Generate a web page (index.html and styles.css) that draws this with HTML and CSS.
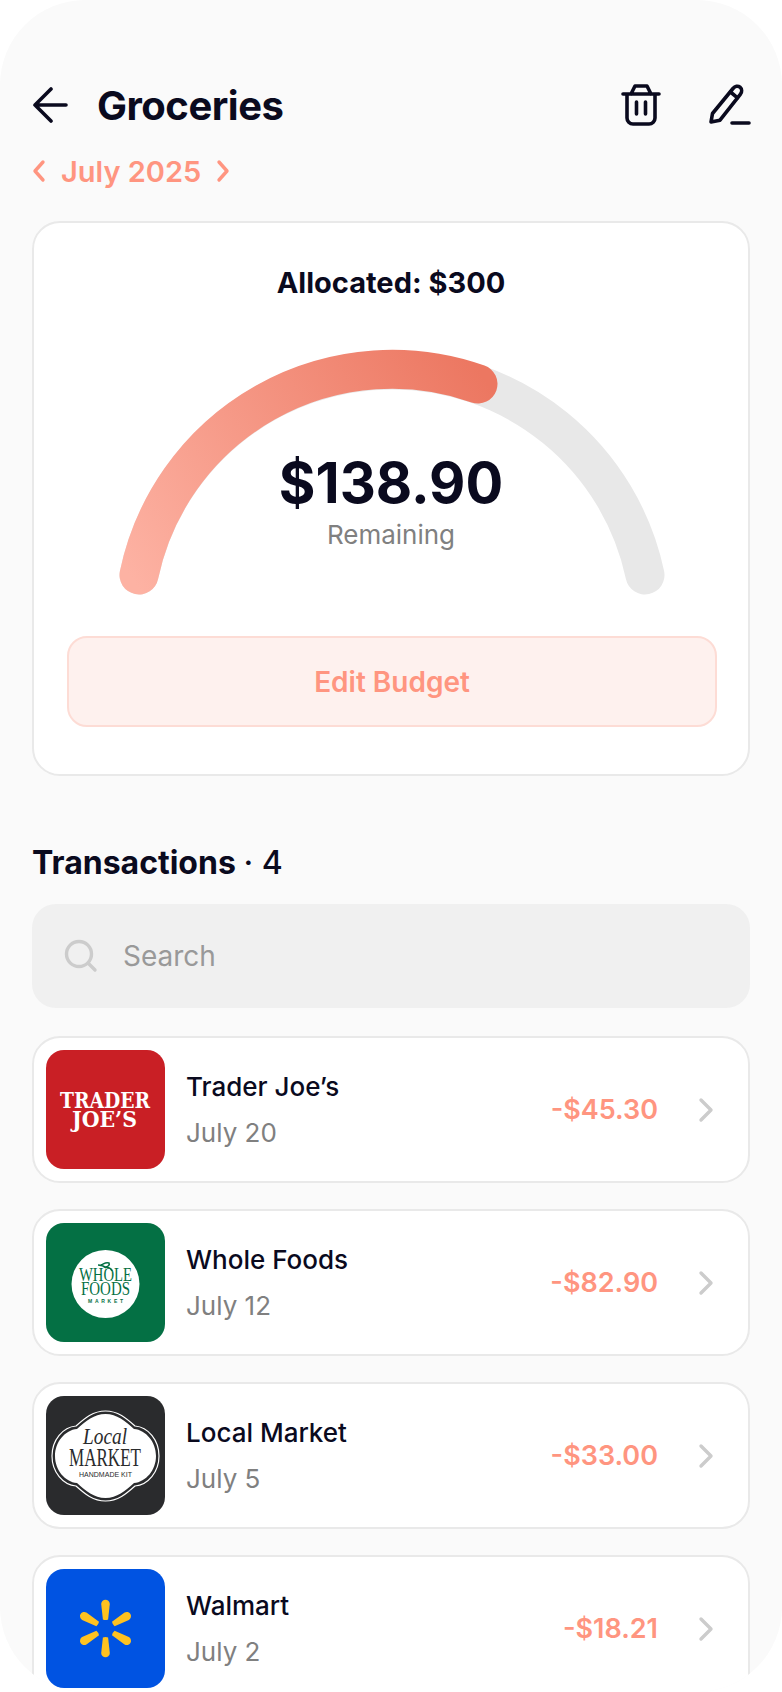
FILE: index.html
```html
<!DOCTYPE html>
<html lang="en">
<head>
    <meta charset="UTF-8">
    <meta name="viewport" content="width=device-width, initial-scale=1.0">
    <title>Groceries</title>
    <link rel="stylesheet" href="styles.css">
</head>
<body>
    <div class="screen">
        <header class="top-bar">
            <svg class="icon-back" viewBox="0 0 36 36" fill="none" stroke="#0a0a1e" stroke-width="3.6" stroke-linecap="round" stroke-linejoin="round">
                <path d="M19 2 3 18l16 16M3 18h31"/>
            </svg>
            <h1 class="page-title">Groceries</h1>
            <svg class="icon-trash" viewBox="0 0 40 44" fill="none" stroke="#0a0a1e" stroke-width="3.6" stroke-linecap="round" stroke-linejoin="round">
                <path d="M2 11h36M6 11v24a6 6 0 0 0 6 6h16a6 6 0 0 0 6-6V11M10 11l4-8h12l4 8M15.500 19v12M24.500 19v12"/>
            </svg>
            <svg class="icon-pen" viewBox="0 0 44 44" fill="none" stroke="#0a0a1e" stroke-width="3.6" stroke-linecap="round" stroke-linejoin="round">
                <path d="M4 39l1.500-8.500L26 5.500c2-2.500 5-3 7-1.300s2.200 4.800.3 7.200L13 37.200 4 39z"/>
                <path d="M23.500 9l7 5.800M25 40h17"/>
            </svg>
        </header>

        <div class="month-nav">
            <svg class="icon-month" viewBox="0 0 14 24" fill="none" stroke="#ff9580" stroke-width="3.4" stroke-linecap="round" stroke-linejoin="round"><path d="M11 3 3 12l8 9"/></svg>
            <span class="month-label">July 2025</span>
            <svg class="icon-month" viewBox="0 0 14 24" fill="none" stroke="#ff9580" stroke-width="3.4" stroke-linecap="round" stroke-linejoin="round"><path d="M3 3l8 9-8 9"/></svg>
        </div>

        <section class="budget-card">
            <h2 class="allocated">Allocated: $300</h2>
            <div class="gauge">
                <svg class="gauge-arc" viewBox="0 0 650 270" fill="none" stroke-width="39" stroke-linecap="round">
                    <defs>
                        <linearGradient id="arc-fill" gradientUnits="userSpaceOnUse" x1="72" y1="250" x2="411" y2="30">
                            <stop offset="0" stop-color="#fdb2a3"/>
                            <stop offset="1" stop-color="#ec7761"/>
                        </linearGradient>
                    </defs>
                    <path d="M72 236A258.600 258.600 0 0 1 578 236" stroke="#e8e8e8"/>
                    <path d="M72 236A258.600 258.600 0 0 1 411 45" stroke="url(#arc-fill)"/>
                </svg>
                <div class="gauge-text">
                    <div class="gauge-amount">$138.90</div>
                    <div class="gauge-label">Remaining</div>
                </div>
            </div>
            <button class="edit-btn">Edit Budget</button>
        </section>

        <h2 class="section-title">Transactions <span class="section-count">· 4</span></h2>

        <div class="search">
            <svg class="icon-search" viewBox="0 0 34 34" fill="none" stroke="#cccccc" stroke-width="3.4" stroke-linecap="round">
                <circle cx="15" cy="15" r="12.500"/>
                <path d="M24.500 24.500 31 31"/>
            </svg>
            <span class="search-text">Search</span>
        </div>

        <div class="tx-row">
            <svg class="logo" viewBox="0 0 119 119">
                <rect class="logo-tj" width="119" height="119" rx="18"/>
                <text class="tj-text" x="14" y="58" textLength="90" lengthAdjust="spacingAndGlyphs">TRADER</text>
                <text class="tj-text" x="26" y="77" textLength="65" lengthAdjust="spacingAndGlyphs">JOE’S</text>
            </svg>
            <div class="tx-info">
                <div class="tx-name">Trader Joe’s</div>
                <div class="tx-date">July 20</div>
            </div>
            <div class="tx-amount">-$45.30</div>
            <svg class="icon-chevron" viewBox="0 0 16 26" fill="none" stroke="#cccccc" stroke-width="3.4" stroke-linecap="round" stroke-linejoin="round"><path d="M3 3l10 10L3 23"/></svg>
        </div>

        <div class="tx-row">
            <svg class="logo" viewBox="0 0 119 119">
                <rect class="logo-wf" width="119" height="119" rx="18"/>
                <circle cx="59.500" cy="61" r="34" fill="#fff"/>
                <path class="wf-leaf" d="M55 42c3-1 4-3 8-2 1 2-1 4-4 4 3 0 6 1 7 4M52 42c3 0 6 1 8 3"/>
                <text class="wf-text" x="33" y="58" textLength="53" lengthAdjust="spacingAndGlyphs">WHOLE</text>
                <text class="wf-text" x="35" y="72" textLength="49" lengthAdjust="spacingAndGlyphs">FOODS</text>
                <text class="wf-small" x="42" y="80" textLength="35">MARKET</text>
            </svg>
            <div class="tx-info">
                <div class="tx-name">Whole Foods</div>
                <div class="tx-date">July 12</div>
            </div>
            <div class="tx-amount">-$82.90</div>
            <svg class="icon-chevron" viewBox="0 0 16 26" fill="none" stroke="#cccccc" stroke-width="3.4" stroke-linecap="round" stroke-linejoin="round"><path d="M3 3l10 10L3 23"/></svg>
        </div>

        <div class="tx-row">
            <svg class="logo" viewBox="0 0 119 119">
                <rect class="logo-lm" width="119" height="119" rx="18"/>
                <path d="M59.500 15C72 15 80 22 89 30c13 1 24 14 24 30s-11 29-24 30c-9 8-17 15-29.500 15S39 98 30 90C17 89 6 76 6 60s11-29 24-30c9-8 17-15 29.500-15z" fill="none" stroke="#fff" stroke-width="1.200"/>
                <path d="M59.500 18C71 18 79 25 88 33c12 1 22 13 22 27s-10 26-22 27c-9 8-17 15-28.500 15S40 95 31 87C19 86 9 74 9 60s10-26 22-27c9-8 17-15 28.500-15z" fill="#fff"/>
                <text class="lm-script" x="37" y="48" textLength="44" lengthAdjust="spacingAndGlyphs">Local</text>
                <text class="lm-big" x="23" y="70" textLength="72" lengthAdjust="spacingAndGlyphs">MARKET</text>
                <text class="lm-small" x="33" y="81" textLength="53" lengthAdjust="spacingAndGlyphs">HANDMADE KIT</text>
            </svg>
            <div class="tx-info">
                <div class="tx-name">Local Market</div>
                <div class="tx-date">July 5</div>
            </div>
            <div class="tx-amount">-$33.00</div>
            <svg class="icon-chevron" viewBox="0 0 16 26" fill="none" stroke="#cccccc" stroke-width="3.4" stroke-linecap="round" stroke-linejoin="round"><path d="M3 3l10 10L3 23"/></svg>
        </div>

        <div class="tx-row">
            <svg class="logo" viewBox="0 0 119 119">
                <rect class="logo-wm" width="119" height="119" rx="18"/>
                <g transform="translate(59.500 59.500)" fill="#ffc220">
                    <path id="petal" d="M-2.600-9Q0-8 2.600-9L4.300-24.500a4.300 4.300 0 0 0-8.600 0z"/>
                    <use href="#petal" transform="rotate(60)"/>
                    <use href="#petal" transform="rotate(120)"/>
                    <use href="#petal" transform="rotate(180)"/>
                    <use href="#petal" transform="rotate(240)"/>
                    <use href="#petal" transform="rotate(300)"/>
                </g>
            </svg>
            <div class="tx-info">
                <div class="tx-name">Walmart</div>
                <div class="tx-date">July 2</div>
            </div>
            <div class="tx-amount">-$18.21</div>
            <svg class="icon-chevron" viewBox="0 0 16 26" fill="none" stroke="#cccccc" stroke-width="3.4" stroke-linecap="round" stroke-linejoin="round"><path d="M3 3l10 10L3 23"/></svg>
        </div>
    </div>
</body>
</html>
```

FILE: styles.css
```css
/* Groceries budget screen */
body {
    margin: 0;
    background-color: #fff;
    font-family: Inter, "Noto Sans", sans-serif;
    color: #0a0a1e;
}

.screen {
    width: 782px;
    height: 1692px;
    box-sizing: border-box;
    padding: 84px 32px 0;
    background-color: #fafafa;
    border-radius: 85px;
    overflow: hidden;
}

/* Header */
.top-bar {
    display: flex;
    align-items: center;
    height: 42px;
}

.icon-back {
    width: 36px;
    height: 36px;
    margin-right: 29px;
    flex-shrink: 0;
}

.page-title {
    flex: 1;
    margin: 0;
    font-size: 40px;
    font-weight: 700;
    letter-spacing: -0.5px;
}

.icon-trash {
    width: 40px;
    height: 44px;
    margin-right: 46px;
}

.icon-pen {
    width: 44px;
    height: 44px;
    margin-right: -1px;
}

.month-nav {
    display: flex;
    align-items: center;
    gap: 15px;
    height: 38px;
    margin-top: 26px;
}

.icon-month {
    width: 14px;
    height: 24px;
}

.month-label {
    font-size: 29px;
    font-weight: 600;
    color: #ff9580;
}

/* Budget card */
.budget-card {
    box-sizing: border-box;
    height: 555px;
    margin-top: 31px;
    padding: 0 33px;
    background-color: #fff;
    border: 2px solid #e9e9e9;
    border-radius: 28px;
}

.allocated {
    margin: 42px 0 0;
    font-size: 29px;
    font-weight: 700;
    line-height: 36px;
    text-align: center;
}

.gauge {
    position: relative;
    height: 270px;
    margin-top: 38px;
}

.gauge-arc {
    display: block;
    width: 650px;
    height: 270px;
}

.gauge-text {
    position: absolute;
    left: 0;
    right: 0;
    top: 112px;
    text-align: center;
}

.gauge-amount {
    font-size: 56px;
    font-weight: 700;
    line-height: 64px;
}

.gauge-label {
    font-size: 26px;
    line-height: 34px;
    margin-top: 3px;
    color: #808080;
}

.edit-btn {
    display: block;
    box-sizing: border-box;
    width: 650px;
    height: 91px;
    margin-top: 27px;
    background-color: #fef1ee;
    border: 2px solid #fddcd5;
    border-radius: 20px;
    font-family: inherit;
    font-size: 28px;
    font-weight: 600;
    color: #ff9580;
}

/* Transactions */
.section-title {
    margin: 68px 0 0;
    font-size: 32px;
    font-weight: 700;
    line-height: 38px;
}

.section-count {
    font-weight: 500;
}

.search {
    display: flex;
    align-items: center;
    box-sizing: border-box;
    height: 104px;
    margin-top: 22px;
    padding-left: 32px;
    background-color: #f0f0f0;
    border-radius: 24px;
}

.icon-search {
    width: 34px;
    height: 34px;
    margin-right: 25px;
}

.search-text {
    font-size: 28px;
    color: #999;
}

.tx-row {
    display: flex;
    align-items: center;
    box-sizing: border-box;
    height: 147px;
    margin-top: 26px;
    padding: 12px;
    background-color: #fff;
    border: 2px solid #e9e9e9;
    border-radius: 28px;
}

.search + .tx-row {
    margin-top: 28px;
}

.logo {
    display: block;
    width: 119px;
    height: 119px;
    flex-shrink: 0;
}

.tx-info {
    flex: 1;
    margin-left: 21px;
}

.tx-name {
    font-size: 26px;
    font-weight: 500;
    line-height: 34px;
}

.tx-date {
    margin-top: 12px;
    font-size: 26px;
    line-height: 34px;
    color: #808080;
}

.tx-amount {
    font-size: 27px;
    font-weight: 600;
    color: #ff9580;
}

.icon-chevron {
    width: 16px;
    height: 26px;
    margin: 0 22px 0 40px;
}

/* Store logos */
.logo-tj { fill: #c91f25; }
.logo-wf { fill: #047044; }
.logo-lm { fill: #2a2b2d; }
.logo-wm { fill: #0053e2; }

.tj-text {
    font-family: "DejaVu Serif", serif;
    font-size: 23px;
    font-weight: 700;
    fill: #fff;
}

.wf-leaf {
    fill: none;
    stroke: #047044;
    stroke-width: 1.6;
}

.wf-text {
    font-family: "Liberation Serif", serif;
    font-size: 19px;
    fill: #047044;
}

.wf-small {
    font-family: "Liberation Sans", sans-serif;
    font-size: 5px;
    font-weight: 700;
    fill: #047044;
}

.lm-script {
    font-family: "Liberation Serif", serif;
    font-size: 23px;
    font-style: italic;
    fill: #2a2b2d;
}

.lm-big {
    font-family: "Liberation Serif", serif;
    font-size: 25px;
    fill: #2a2b2d;
}

.lm-small {
    font-family: "Liberation Sans", sans-serif;
    font-size: 7.500px;
    fill: #2a2b2d;
}
```
